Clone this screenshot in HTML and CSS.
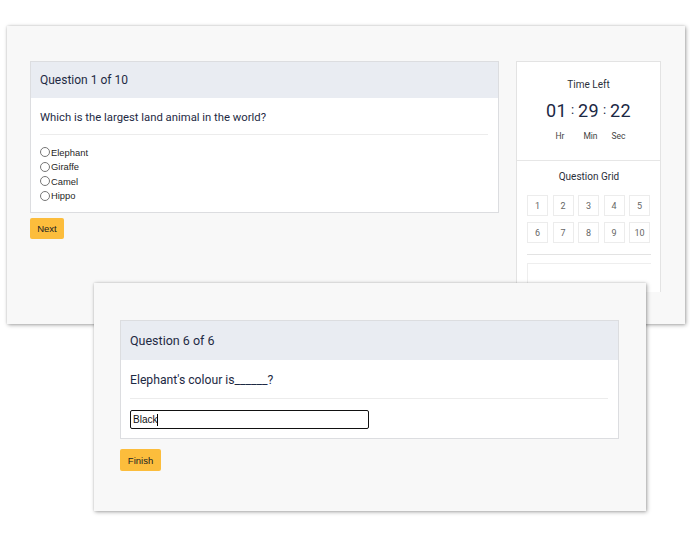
FILE: index.html
```html
<!DOCTYPE html>
<html>
<head>
<meta charset="utf-8">
<link rel="stylesheet" href="styles.css">
</head>
<body>
<div class="desk">
  <div class="window win-back">
    <div class="clip">
      <div class="layout">
        <div class="main">
          <div class="card card-1">
            <div class="card-head">Question 1 of 10</div>
            <div class="card-body">
              <div class="question">Which is the largest land animal in the world?</div>
              <div class="options">
                <label class="opt"><span class="radio"></span>Elephant</label>
                <label class="opt"><span class="radio"></span>Giraffe</label>
                <label class="opt"><span class="radio"></span>Camel</label>
                <label class="opt"><span class="radio"></span>Hippo</label>
              </div>
            </div>
          </div>
          <button class="btn btn-next">Next</button>
        </div>
        <aside class="side">
          <div class="timer">
            <div class="side-title">Time Left</div>
            <div class="clock"><span class="num">01</span><span class="colon">:</span><span class="num">29</span><span class="colon">:</span><span class="num">22</span></div>
            <div class="units"><span>Hr</span><span>Min</span><span>Sec</span></div>
          </div>
          <div class="grid-sec">
            <div class="side-title">Question Grid</div>
            <div class="qgrid">
              <span class="qb">1</span><span class="qb">2</span><span class="qb">3</span><span class="qb">4</span><span class="qb">5</span>
              <span class="qb">6</span><span class="qb">7</span><span class="qb">8</span><span class="qb">9</span><span class="qb">10</span>
            </div>
            <div class="legend"></div>
          </div>
        </aside>
      </div>
    </div>
  </div>

  <div class="window win-front">
    <div class="card card-2">
      <div class="card-head">Question 6 of 6</div>
      <div class="card-body">
        <div class="question">Elephant's colour is______?</div>
        <div class="answer"><span class="answer-text">Black</span><span class="caret"></span></div>
      </div>
    </div>
    <button class="btn btn-finish">Finish</button>
  </div>
</div>
</body>
</html>
```

FILE: styles.css
```css
* { box-sizing: border-box; }
html, body { margin: 0; padding: 0; background: #ffffff; }
body { width: 690px; height: 544px; overflow: hidden; font-family: Roboto, "Liberation Sans", sans-serif; color: #1e2a44; }

.desk { position: relative; width: 690px; height: 544px; }

.window {
  position: absolute;
  background: #f8f8f8;
  box-shadow: 1px 1px 4px rgba(0,0,0,0.35), 0 0 2px rgba(0,0,0,0.12);
}
.win-back { left: 7px; top: 26px; width: 678px; height: 298px; }
.win-front { left: 94px; top: 283px; width: 552px; height: 228px; padding: 37px 27px 0 26px; }

.clip { height: 266px; overflow: hidden; padding: 35px 24px 0 23px; }
.layout { display: flex; gap: 17px; align-items: flex-start; }
.main { width: 469px; }

.card { background: #ffffff; border: 1px solid #dcdde0; }
.card-head {
  background: #e9ecf2;
  height: 36px;
  display: flex; align-items: center;
  padding-left: 9px;
  font-size: 12px;
  color: #1e2a44;
}
.card-body { padding: 0 10px 0 9px; }
.question {
  font-size: 11.3px;
  color: #1e2a44;
  height: 37px;
  display: flex; align-items: center;
  border-bottom: 1px solid #ececec;
}
.card-1 .question { padding-top: 3px; }
.options { padding: 10px 0 9px; display: flex; flex-direction: column; }
.opt {
  display: flex; align-items: center;
  height: 14.5px;
  font-family: "Liberation Sans", Arial, sans-serif;
  font-size: 9.4px;
  color: #1f1f1f;
}
.radio {
  width: 10px; height: 10px;
  border: 1px solid #767676;
  border-radius: 50%;
  background: #fff;
  margin-right: 1px;
}

.btn {
  display: block;
  border: none;
  border-radius: 2px;
  background: #fcbd3c;
  color: #222;
  font-family: "Liberation Sans", Arial, sans-serif;
  font-size: 9.5px;
  padding: 0;
}
.btn-next { margin-top: 5px; width: 34px; height: 21px; }
.btn-finish { margin-top: 10px; width: 41px; height: 22px; }

.side {
  width: 145px;
  background: #ffffff;
  border: 1px solid #e3e3e3;
  height: 260px;
}
.timer {
  height: 99px;
  border-bottom: 1px solid #e6e6e6;
  display: flex; flex-direction: column; align-items: center;
  padding-top: 17px;
}
.side-title { font-size: 10px; color: #2a2f3a; text-align: center; line-height: 12px; }
.clock { display: flex; align-items: center; margin-top: 8px; height: 22px; color: #1b2844; }
.clock .num { font-size: 18px; letter-spacing: 0.3px; }
.clock .colon { font-size: 13px; margin: 0 4px; position: relative; top: -1px; }
.units { display: flex; margin-top: 10px; font-size: 8.5px; color: #444; padding-left: 4px; }
.units span:nth-child(1) { margin-right: 19px; }
.units span:nth-child(2) { margin-right: 14px; }

.grid-sec { padding: 10px 9px 0 10px; }
.qgrid {
  margin-top: 12px;
  display: grid;
  grid-template-columns: repeat(5, 21px);
  column-gap: 4.5px;
  row-gap: 6px;
}
.qb {
  height: 21px;
  border: 1px solid #ececec;
  display: flex; align-items: center; justify-content: center;
  font-size: 9px; color: #666;
  background: #fff;
}
.legend {
  margin-top: 11px;
  border-top: 1px solid #e3e3e3;
  padding-top: 8px;
  height: 60px;
}
.legend::before {
  content: "";
  display: block;
  height: 60px;
  border: 1px solid #eeeeee;
  border-right: none;
}

.card-2 .card-head { height: 39px; font-size: 12.5px; }
.card-2 .question { height: 39px; font-size: 12.2px; padding-top: 2px; }
.answer {
  margin: 11px 0 9px 0;
  width: 239px; height: 19px;
  border: 1px solid #111;
  border-radius: 2px;
  background: #fff;
  display: flex; align-items: center;
  padding-left: 2px;
  font-family: "Liberation Sans", Arial, sans-serif;
  font-size: 10px;
  color: #111;
}
.caret { width: 1px; height: 12px; background: #000; }
```
